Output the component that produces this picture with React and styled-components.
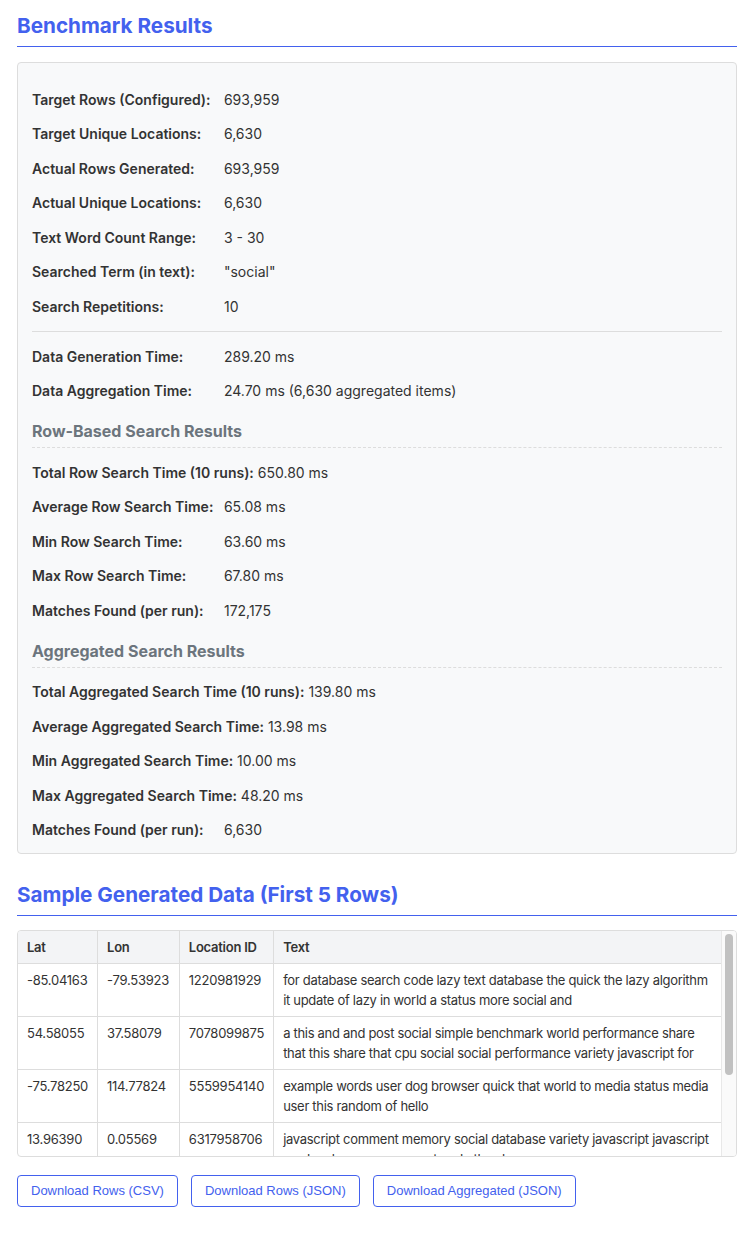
import styled, { createGlobalStyle } from 'styled-components';

const GlobalStyle = createGlobalStyle`
    html, body {
        margin: 0;
        padding: 0;
        background: #ffffff;
    }
    body {
        font-family: Inter, "Noto Sans", "Liberation Sans", sans-serif;
        color: #333333;
    }
`;

const summary = [
    ['Target Rows (Configured):', '693,959'],
    ['Target Unique Locations:', '6,630'],
    ['Actual Rows Generated:', '693,959'],
    ['Actual Unique Locations:', '6,630'],
    ['Text Word Count Range:', '3 - 30'],
    ['Searched Term (in text):', '"social"'],
    ['Search Repetitions:', '10'],
];

const timings = [
    ['Data Generation Time:', '289.20 ms'],
    ['Data Aggregation Time:', '24.70 ms (6,630 aggregated items)'],
];

const rowSearch = [
    ['Total Row Search Time (10 runs):', '650.80 ms'],
    ['Average Row Search Time:', '65.08 ms'],
    ['Min Row Search Time:', '63.60 ms'],
    ['Max Row Search Time:', '67.80 ms'],
    ['Matches Found (per run):', '172,175'],
];

const aggSearch = [
    ['Total Aggregated Search Time (10 runs):', '139.80 ms'],
    ['Average Aggregated Search Time:', '13.98 ms'],
    ['Min Aggregated Search Time:', '10.00 ms'],
    ['Max Aggregated Search Time:', '48.20 ms'],
    ['Matches Found (per run):', '6,630'],
];

const sampleRows = [
    ['-85.04163', '-79.53923', '1220981929', 'for database search code lazy text database the quick the lazy algorithm it update of lazy in world a status more social and'],
    ['54.58055', '37.58079', '7078099875', 'a this and and post social simple benchmark world performance share that this share that cpu social social performance variety javascript for'],
    ['-75.78250', '114.77824', '5559954140', 'example words user dog browser quick that world to media status media user this random of hello'],
    ['13.96390', '0.05569', '6317958706', 'javascript comment memory social database variety javascript javascript random brown a user post code the share'],
    ['41.20387', '-151.62410', '2904417735', 'status cpu fox lazy the world update hello test search for simple text'],
];

function StatLines({ items }) {
    return items.map(([label, value], i) => (
        <Stat key={i}>
            <Label>{label}</Label> {value}
        </Stat>
    ));
}

function App() {
    return (
        <Page>
            <GlobalStyle />
            <Heading>Benchmark Results</Heading>
            <Panel>
                <StatLines items={summary} />
                <Divider />
                <StatLines items={timings} />
                <SubHeading>Row-Based Search Results</SubHeading>
                <StatLines items={rowSearch} />
                <SubHeading>Aggregated Search Results</SubHeading>
                <StatLines items={aggSearch} />
            </Panel>

            <Heading $second>Sample Generated Data (First 5 Rows)</Heading>
            <TableWrap>
                <ScrollArea>
                    <Table>
                        <thead>
                            <tr>
                                <Th>Lat</Th>
                                <Th>Lon</Th>
                                <Th>Location ID</Th>
                                <Th>Text</Th>
                            </tr>
                        </thead>
                        <tbody>
                            {sampleRows.map((row, i) => (
                                <tr key={i}>
                                    {row.map((cell, j) => (
                                        <Td key={j}>{cell}</Td>
                                    ))}
                                </tr>
                            ))}
                        </tbody>
                    </Table>
                </ScrollArea>
                <ScrollTrack>
                    <ScrollThumb />
                </ScrollTrack>
            </TableWrap>

            <Actions>
                <ActionButton>Download Rows (CSV)</ActionButton>
                <ActionButton>Download Rows (JSON)</ActionButton>
                <ActionButton>Download Aggregated (JSON)</ActionButton>
            </Actions>
        </Page>
    );
}

export default App;

const Page = styled.div`
    width: 720px;
    padding: 0 17px 26px;
`;

const Heading = styled.h2`
    margin: ${(p) => (p.$second ? '27px 0 14px' : '12px 0 15px')};
    padding-bottom: 6px;
    border-bottom: 1px solid #4361ee;
    color: #4361ee;
    font-size: 20.7px;
    line-height: 28px;
    font-weight: 700;
`;

const Panel = styled.div`
    background: #f8f9fa;
    border: 1px solid #dddddd;
    border-radius: 4px;
    padding: 12px 14px 0;
    display: flow-root;
`;

const Stat = styled.p`
    margin: 14.5px 0;
    font-size: 14px;
    line-height: 20px;
    color: #333333;

    &:last-child {
        margin-bottom: 13px;
    }
`;

const Label = styled.strong`
    display: inline-block;
    min-width: 188px;
    font-weight: 600;
`;

const Divider = styled.hr`
    border: none;
    border-top: 1px solid #dddddd;
    margin: 0;
`;

const SubHeading = styled.h4`
    margin: 19px 0 10px;
    padding-bottom: 5px;
    border-bottom: 1px dashed #dddddd;
    color: #6c757d;
    font-size: 16px;
    line-height: 22px;
    font-weight: 700;
`;

const TableWrap = styled.div`
    box-sizing: border-box;
    display: flex;
    height: 227px;
    overflow: hidden;
    border: 1px solid #dddddd;
    border-radius: 4px;
`;

const ScrollArea = styled.div`
    flex: 1;
    overflow-y: auto;
    scrollbar-width: none;
`;

const ScrollTrack = styled.div`
    width: 11px;
    flex-shrink: 0;
    background: #fafafa;
    border-left: 1px solid #e8e8e8;
    padding: 3px 0 0 3px;
`;

const ScrollThumb = styled.div`
    width: 8px;
    height: 141px;
    border-radius: 4px;
    background: #c1c1c1;
`;

const Table = styled.table`
    width: 100%;
    border-collapse: collapse;
    font-size: 13px;
    line-height: 20px;
    letter-spacing: -0.25px;
    color: #333333;
`;

const Th = styled.th`
    position: sticky;
    top: 0;
    background: #f3f4f6;
    text-align: left;
    font-weight: 600;
    padding: 6px 9px;
    border: 1px solid #dddddd;
    border-top: none;
    white-space: nowrap;

    &:first-child { border-left: none; }
    &:last-child { border-right: none; }
`;

const Td = styled.td`
    padding: 6px 9px;
    border: 1px solid #dddddd;
    vertical-align: top;
    white-space: nowrap;

    &:first-child { border-left: none; }
    &:last-child {
        border-right: none;
        white-space: normal;
        letter-spacing: -0.3px;
    }
`;

const Actions = styled.div`
    display: flex;
    gap: 13px;
    margin-top: 18px;
`;

const ActionButton = styled.button`
    background: #ffffff;
    color: #4361ee;
    border: 1px solid #4361ee;
    border-radius: 4px;
    padding: 7px 13px;
    font-family: "Liberation Sans", Arial, sans-serif;
    font-size: 13px;
    line-height: 16px;
    cursor: pointer;
`;
